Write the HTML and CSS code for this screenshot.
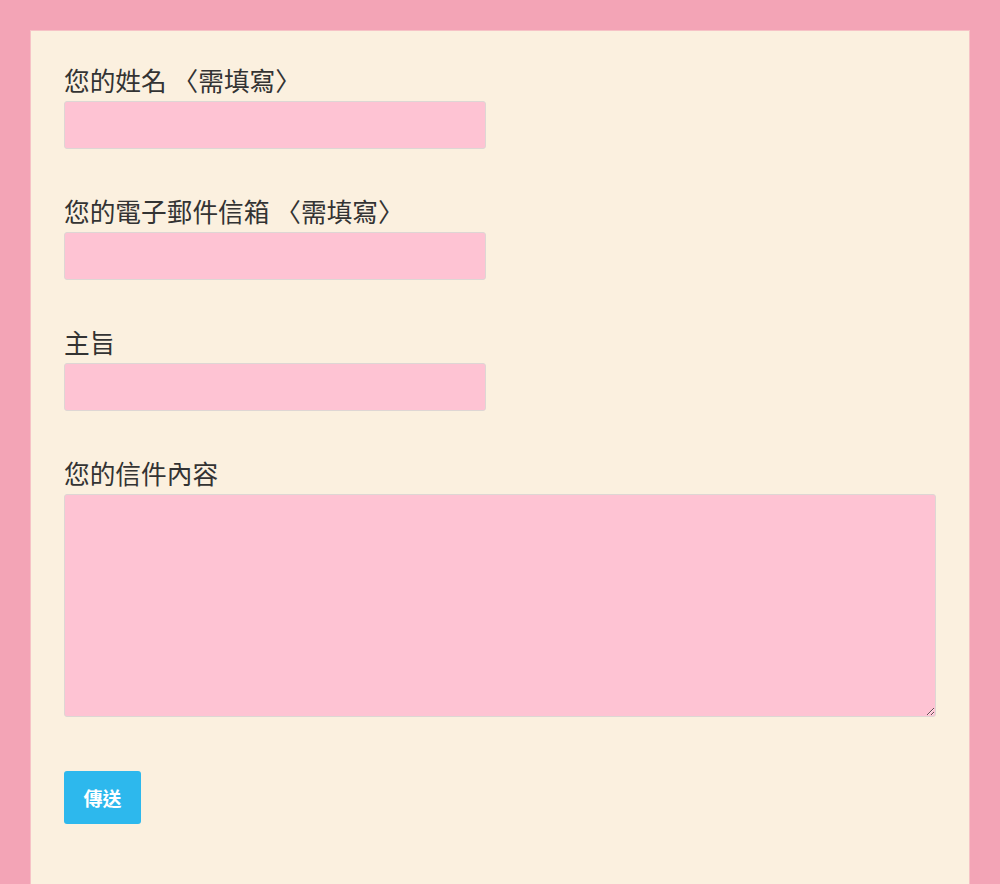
FILE: index.html
```html
<!DOCTYPE html>
<html lang="zh-Hant">
<head>
<meta charset="utf-8">
<title>聯絡表單</title>
<link rel="stylesheet" href="styles.css">
</head>
<body>
<div class="panel">
  <form class="form">
    <div class="field">
      <label class="label" for="name">您的姓名 〈需填寫〉</label>
      <input class="input" id="name" type="text">
    </div>
    <div class="field">
      <label class="label" for="email">您的電子郵件信箱 〈需填寫〉</label>
      <input class="input" id="email" type="email">
    </div>
    <div class="field">
      <label class="label" for="subject">主旨</label>
      <input class="input" id="subject" type="text">
    </div>
    <div class="field field-last">
      <label class="label" for="msg">您的信件內容</label>
      <textarea class="textarea" id="msg"></textarea>
    </div>
    <button class="submit" type="button">傳送</button>
  </form>
</div>
</body>
</html>
```
FILE: styles.css
```css
html, body {
  margin: 0;
  padding: 0;
}
body {
  background: #f3a4b6;
  padding: 31px 31px 0;
  font-family: "Noto Sans CJK TC", "Noto Sans", sans-serif;
  color: #333;
}
.panel {
  background: #fbf0df;
  box-shadow: 0 0 0 1px #f6c2c6;
  min-height: 853px;
  padding: 33px 33px 40px;
  box-sizing: border-box;
}
.form {
  display: flex;
  flex-direction: column;
  align-items: flex-start;
}
.field {
  display: flex;
  flex-direction: column;
  align-items: flex-start;
  margin-bottom: 46px;
}
.field-last {
  margin-bottom: 54px;
}
.label {
  display: block;
  font-size: 25.7px;
  line-height: 32px;
  margin-bottom: 5px;
  color: #333;
}
.input,
.textarea {
  box-sizing: border-box;
  background: #fec3d3;
  border: 1px solid #ded6d4;
  border-radius: 3px;
  margin: 0;
  padding: 8px;
  font-family: inherit;
  font-size: 16px;
  color: #333;
}
.input {
  width: 422px;
  height: 48px;
}
.textarea {
  width: 872px;
  height: 223px;
  resize: both;
  display: block;
}
.submit {
  width: 77px;
  height: 53px;
  background: #2db8ed;
  color: #fff;
  border: none;
  border-radius: 3px;
  font-family: inherit;
  font-size: 19px;
  font-weight: 700;
  padding: 0;
  cursor: pointer;
}
```
